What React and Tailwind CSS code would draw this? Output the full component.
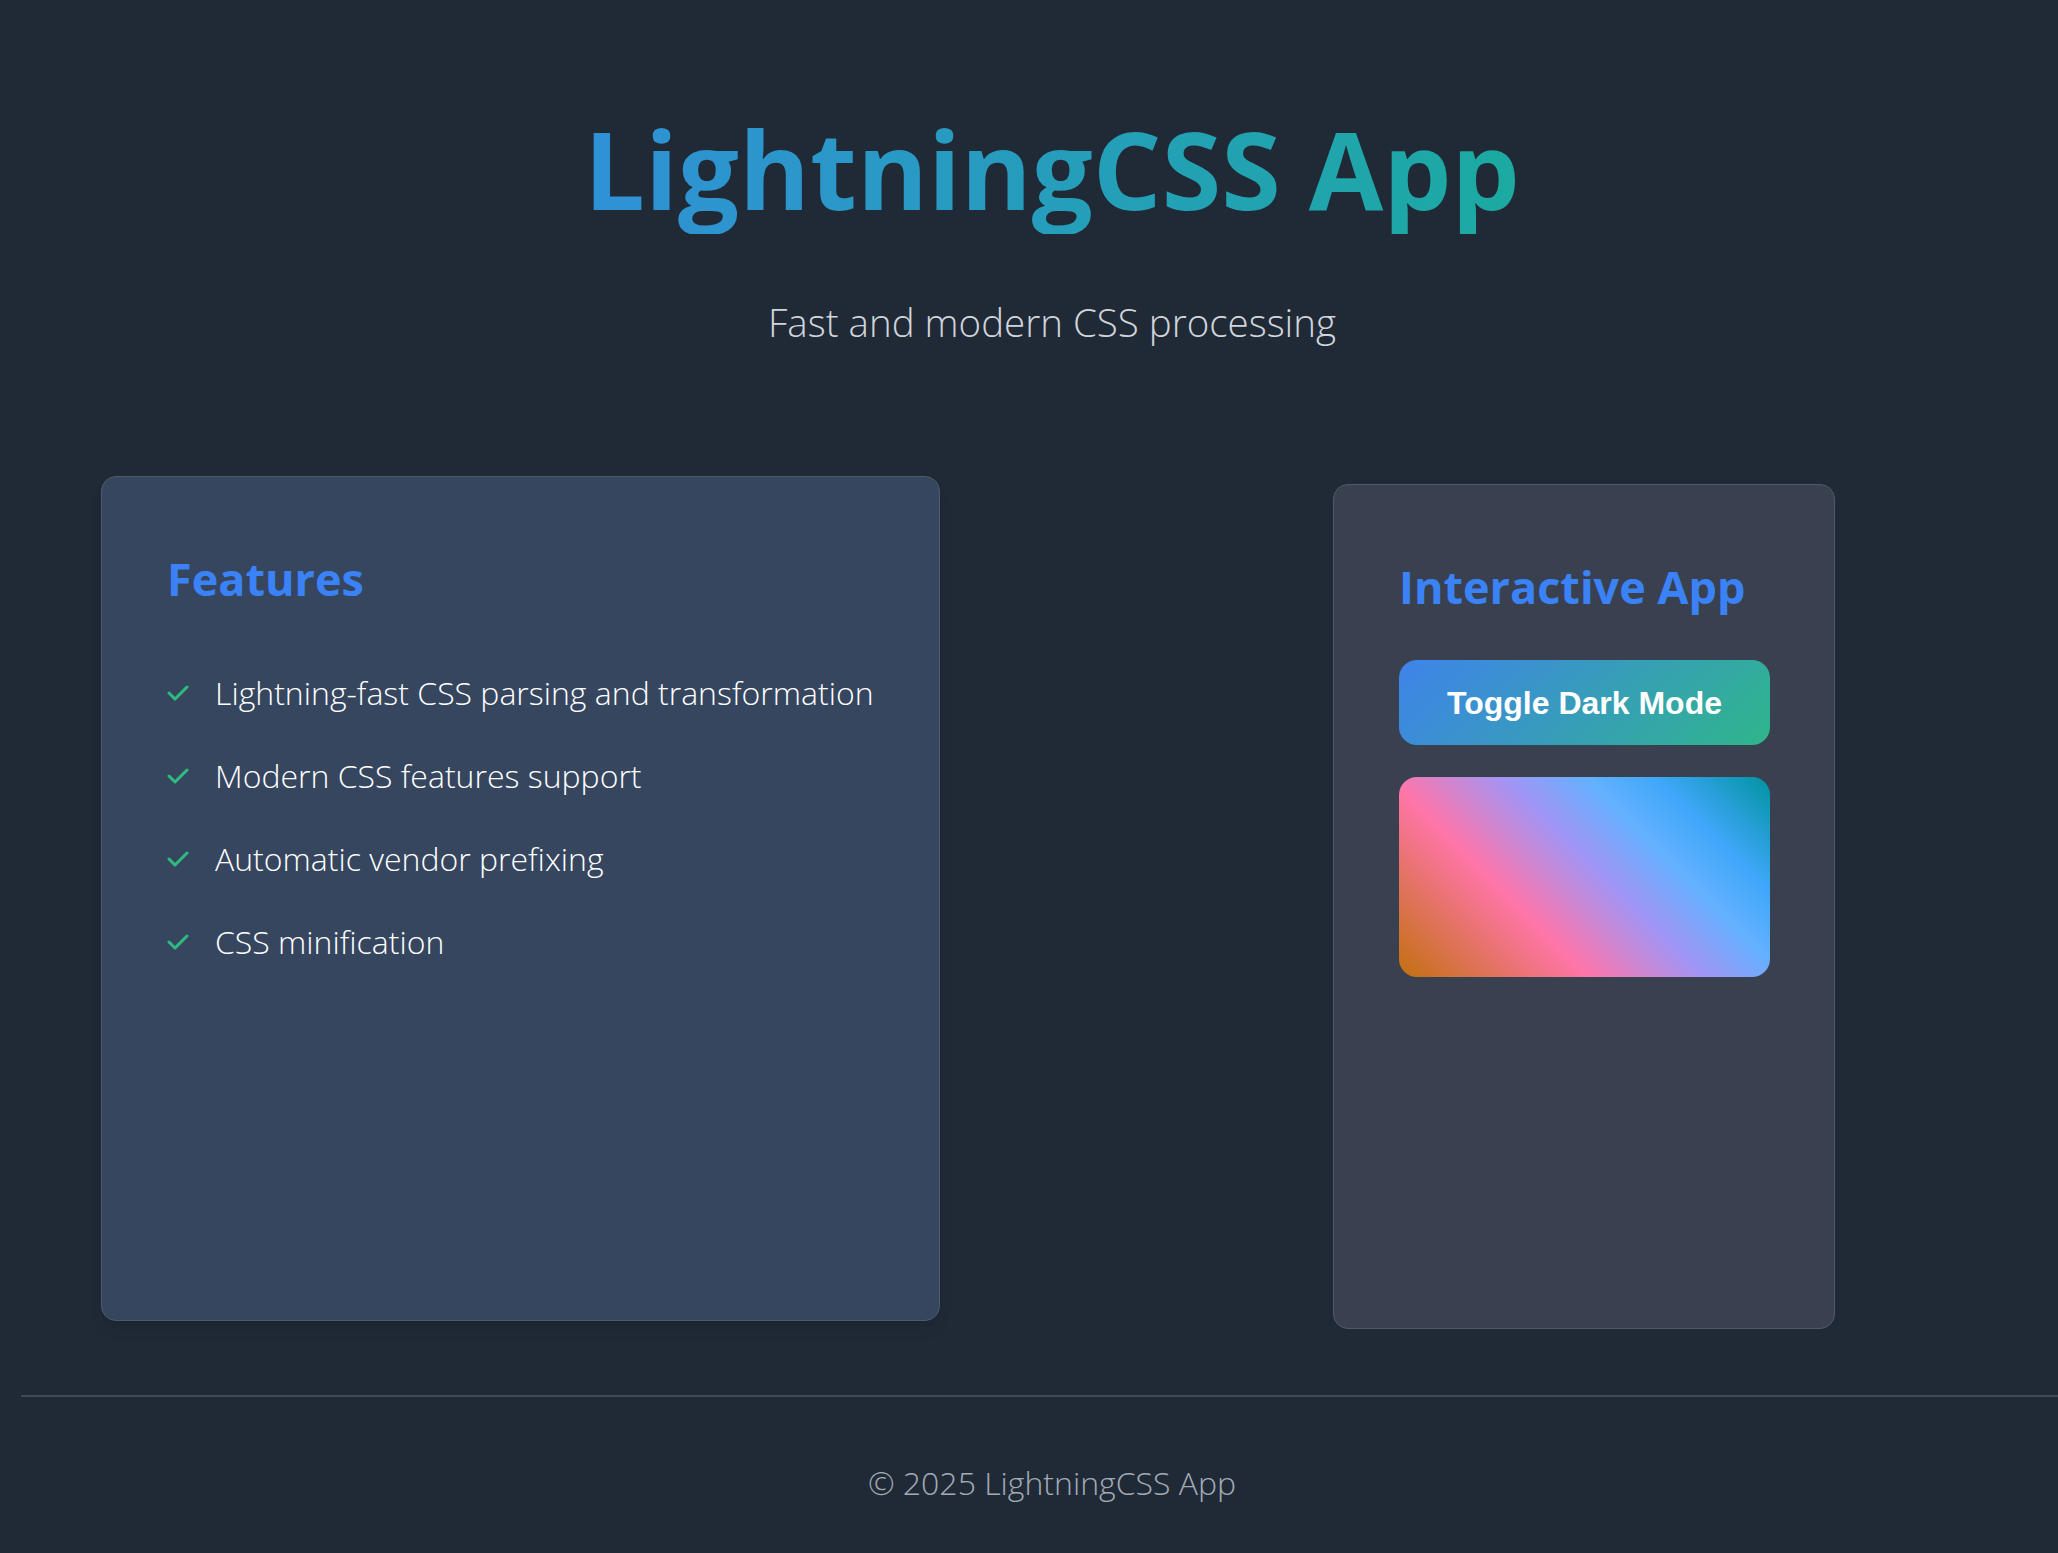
const features = [
  'Lightning-fast CSS parsing and transformation',
  'Modern CSS features support',
  'Automatic vendor prefixing',
  'CSS minification',
]

function Check() {
  return (
    <svg width="22" height="18" viewBox="0 0 22 18" className="shrink-0" aria-hidden="true">
      <polyline points="2,9 8,15 20,3" fill="none" stroke="#2dbb80" strokeWidth="3" strokeLinecap="round" strokeLinejoin="round" />
    </svg>
  )
}

export default function App() {
  return (
    <div className="min-h-screen w-full overflow-hidden bg-[#202a37] font-['Open_Sans',sans-serif]">
      <div className="ml-[21px] w-[2062px]">
        <header className="pt-[104px] text-center">
          <h1 className="bg-[linear-gradient(90deg,#3b82f6,#10b981)] bg-clip-text text-[108px] font-bold leading-[130px] text-transparent">LightningCSS App</h1>
          <p className="mt-[60px] text-[38.5px] font-light leading-[57px] text-[#d1d5db]">Fast and modern CSS processing</p>
        </header>

        <main className="mt-[125px] flex items-start gap-[393px] pl-[80px]">
          <section className="h-[845px] w-[839px] rounded-[15px] border border-[#4f5a6b] bg-[#36465f] px-[65px] pt-[74px] shadow-lg">
            <h2 className="text-[45px] font-bold leading-[56px] text-[#3b82f6]">Features</h2>
            <ul className="mt-[63px] flex flex-col gap-[38px]">
              {features.map((item) => (
                <li key={item} className="flex items-center gap-[26px] text-[32px] font-light leading-[45px] text-white">
                  <Check />
                  <span>{item}</span>
                </li>
              ))}
            </ul>
          </section>

          <section className="mt-[8px] h-[845px] w-[502px] rounded-[15px] border border-[#4f5a6b] bg-[#394150] px-[65px] pt-[74px]">
            <h2 className="text-[45px] font-bold leading-[56px] text-[#3b82f6]">Interactive App</h2>
            <button className="mt-[45px] h-[85px] w-[371px] rounded-[18px] bg-[linear-gradient(135deg,#3f83ea,#2fb68a)] font-['Liberation_Sans',Arial,sans-serif] text-[32px] font-bold text-white">
              Toggle Dark Mode
            </button>
            <div className="mt-[32px] h-[200px] w-[371px] rounded-[18px] bg-[linear-gradient(45deg,#c2700f_0%,#ff75a8_33%,#a394f4_53%,#63b1ff_68%,#3fa7fa_80%,#0093a0_100%)]" />
          </section>
        </main>

        <footer className="mt-[66px] border-t-2 border-[#3f4957] pt-[63px] text-center">
          <p className="text-[32px] font-light leading-[45px] text-[#a3aab5]">© 2025 LightningCSS App</p>
        </footer>
      </div>
    </div>
  )
}
